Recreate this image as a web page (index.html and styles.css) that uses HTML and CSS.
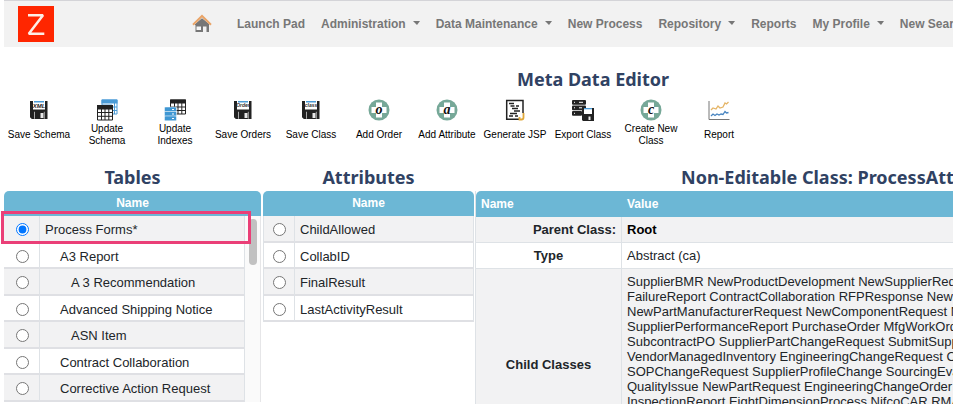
FILE: index.html
```html
<!DOCTYPE html>
<html lang="en">
<head>
<meta charset="utf-8">
<title>Meta Data Editor</title>
<link rel="stylesheet" href="styles.css">
</head>
<body>
<div class="page">
  <header class="topbar">
    <a class="logo" href="#" aria-label="Start">
      <svg viewBox="0 0 36 36" width="36" height="36"><rect width="36" height="36" fill="#ff2600"/><path d="M10 9.3H25L10.8 27.8H26.3" fill="none" stroke="#fdeee6" stroke-width="2.5" stroke-linejoin="bevel"/></svg>
    </a>
    <a class="home" href="#" aria-label="Home">
      <svg viewBox="0 0 20 20" width="20" height="20"><path d="M10 4.500L3.500 10v8H17v-8z" fill="#777"/><path d="M4.500 12.500h4.500V16H4.500z" fill="#f6f6f6"/><path d="M11 12.500h3.500V18H11z" fill="#f2f2f2"/><path d="M1 10.800L10 2l9 8.800" fill="none" stroke="#e9a468" stroke-width="2"/><path d="M3 11L10 4.800 17 11" fill="none" stroke="#777" stroke-width="1"/></svg>
    </a>
    <nav class="menu">
      <a href="#">Launch Pad</a>
      <a class="drop" href="#">Administration</a>
      <a class="drop" href="#">Data Maintenance</a>
      <a href="#">New Process</a>
      <a class="drop" href="#">Repository</a>
      <a href="#">Reports</a>
      <a class="drop" href="#">My Profile</a>
      <a href="#">New Search</a>
    </nav>
  </header>

  <h1>Meta Data Editor</h1>

  <svg class="defs" width="0" height="0" aria-hidden="true">
    <symbol id="disk" viewBox="0 0 20 22"><path d="M1 2h17.500v18H2.800L1 18.200z" fill="#222"/><path d="M4 2h12v8.500H4z" fill="#fff"/><path d="M5 2h10v1.500H5z" fill="#4a9bd6"/><path d="M11.500 14h3v5h-3z" fill="#e8e8e8"/><path d="M5 12.800h1v7H5zM14.800 12.800h1v7h-1z" fill="#aaa"/></symbol>
    <symbol id="plus" viewBox="0 0 22 22"><circle cx="11" cy="11" r="10.500" fill="#76a898"/><path d="M8 3.500h6V8h4.500v6H14v4.500H8V14H3.500V8H8z" fill="#fff"/></symbol>
  </svg>

  <div class="toolbar">
    <button><svg viewBox="0 0 20 22" width="20" height="22"><use href="#disk"/><text class="xml" x="10" y="9" text-anchor="middle">XML</text></svg><span>Save Schema</span></button>
    <button><svg viewBox="0 0 22 22" width="22" height="22"><path d="M6 1h15v14h-5V6H6z" fill="#fff" stroke="#4a9bd6"/><path d="M5.500 .5h16v4h-16z" fill="#4a9bd6"/><path d="M16 8h5M16 11.500h5M18.500 4v11" stroke="#4a9bd6"/><path d="M1.500 7h15v14h-15z" fill="#fff" stroke="#222"/><path d="M1 6h16v4.500H1z" fill="#222"/><path d="M1 13.500h16M1 17.300h16M5.500 10v11M9 10v11M12.800 10v11" stroke="#222"/></svg><span>Update Schema</span></button>
    <button><svg viewBox="0 0 22 22" width="22" height="22"><path d="M6.500 1h15v14h-15z" fill="#fff" stroke="#222"/><path d="M6 .5h16v4H6z" fill="#222"/><path d="M6 8h16M6 11.500h16M10.500 4v11M14 4v11M17.800 4v11" stroke="#222"/><g fill="#3f97d3" stroke="#fff" stroke-width=".5"><rect x=".5" y="8" width="12" height="4.800" rx="1"/><rect x=".5" y="12.500" width="12" height="4.800" rx="1"/><rect x=".5" y="17" width="12" height="4.800" rx="1"/></g><path d="M8 10.500h2M8 15h2M8 19.500h2" stroke="#fff"/></svg><span>Update Indexes</span></button>
    <button><svg viewBox="0 0 20 22" width="20" height="22"><use href="#disk"/><text class="tag" x="10" y="8" text-anchor="middle">Order</text></svg><span>Save Orders</span></button>
    <button><svg viewBox="0 0 20 22" width="20" height="22"><use href="#disk"/><text class="tag" x="10" y="8" text-anchor="middle">class</text></svg><span>Save Class</span></button>
    <button><svg viewBox="0 0 22 22" width="22" height="22"><use href="#plus"/><text class="letter" x="11" y="15" text-anchor="middle">o</text></svg><span>Add Order</span></button>
    <button><svg viewBox="0 0 22 22" width="22" height="22"><use href="#plus"/><text class="letter" x="11" y="15" text-anchor="middle">a</text></svg><span>Add Attribute</span></button>
    <button><svg viewBox="0 0 22 22" width="22" height="22"><path d="M15 20.300H2.700V1.500H19V14" fill="#fff" stroke="#222" stroke-width="1.500"/><path d="M5 4.500h5M6.500 7h4M12 7h3M8 9.500h6M10 12h6M6 14.500h7M5 17h4M11 17h3" stroke="#222" stroke-width="1.300"/><path d="M19.500 14v4.500q0 2-2 2h-2v-2.500" fill="none" stroke="#e0a83a" stroke-width="1.800"/></svg><span>Generate JSP</span></button>
    <button><svg viewBox="0 0 22 22" width="22" height="22"><g fill="#222"><rect x="0" y="1" width="14" height="4.700" rx="1"/><rect x="0" y="6.500" width="14" height="4.700" rx="1"/><rect x="0" y="12" width="10" height="4.700" rx="1"/><path d="M10 9h12v13H11l-1-1z"/></g><path d="M7 3.300h4M7 8.800h3M2 3.300h1M2 8.800h1M2 14.300h1" stroke="#fff"/><path d="M12 10h8v5h-8z" fill="#fff"/><path d="M12 9h8v1.300h-8z" fill="#4a9bd6"/><path d="M16.500 17.500h2V21h-2z" fill="#eee"/></svg><span>Export Class</span></button>
    <button><svg viewBox="0 0 22 22" width="22" height="22"><use href="#plus"/><text class="letter" x="11" y="15" text-anchor="middle">c</text></svg><span>Create New Class</span></button>
    <button><svg viewBox="0 0 22 22" width="22" height="22"><path d="M1 2v18.500h20.500" fill="none" stroke="#777"/><path d="M3 11l2-2 3 1 2-3 2 2 3-1 2-4 1.500 1L20.500 3" fill="none" stroke="#e5b567" stroke-width="1.300"/><path d="M3 17l2-2 2 1.500 2-1.500 2 1 2-1 2 .5 2-3 1.500 1.500 2-.5" fill="none" stroke="#4784c0" stroke-width="1.300"/></svg><span>Report</span></button>
  </div>

  <main class="panels">
    <section class="panel tables">
      <h2>Tables</h2>
      <div class="head">Name</div>
      <div class="scroller">
        <table>
          <tr><td class="pick"><input type="radio" name="t" id="t1" checked></td><td><label for="t1">Process Forms*</label></td></tr>
          <tr><td class="pick"><input type="radio" name="t" id="t2"></td><td class="level1"><label for="t2">A3 Report</label></td></tr>
          <tr><td class="pick"><input type="radio" name="t" id="t3"></td><td class="level2"><label for="t3">A 3 Recommendation</label></td></tr>
          <tr><td class="pick"><input type="radio" name="t" id="t4"></td><td class="level1"><label for="t4">Advanced Shipping Notice</label></td></tr>
          <tr><td class="pick"><input type="radio" name="t" id="t5"></td><td class="level2"><label for="t5">ASN Item</label></td></tr>
          <tr><td class="pick"><input type="radio" name="t" id="t6"></td><td class="level1"><label for="t6">Contract Collaboration</label></td></tr>
          <tr><td class="pick"><input type="radio" name="t" id="t7"></td><td class="level1"><label for="t7">Corrective Action Request</label></td></tr>
        </table>
        <div class="track"><div class="thumb"></div></div>
      </div>
      <div class="callout"></div>
    </section>

    <section class="panel attributes">
      <h2>Attributes</h2>
      <div class="head">Name</div>
      <table>
        <tr><td class="pick"><input type="radio" name="a" id="a1"></td><td><label for="a1">ChildAllowed</label></td></tr>
        <tr><td class="pick"><input type="radio" name="a" id="a2"></td><td><label for="a2">CollabID</label></td></tr>
        <tr><td class="pick"><input type="radio" name="a" id="a3"></td><td><label for="a3">FinalResult</label></td></tr>
        <tr><td class="pick"><input type="radio" name="a" id="a4"></td><td><label for="a4">LastActivityResult</label></td></tr>
      </table>
    </section>

    <section class="panel details">
      <h2>Non-Editable Class: ProcessAttributes</h2>
      <table>
        <thead><tr><th>Name</th><th>Value</th></tr></thead>
        <tbody>
          <tr><th class="end">Parent Class:</th><td class="strong">Root</td></tr>
          <tr><th>Type</th><td>Abstract (ca)</td></tr>
          <tr><th>Child Classes</th><td class="classes">SupplierBMR NewProductDevelopment NewSupplierRequest<br>FailureReport ContractCollaboration RFPResponse NewItem<br>NewPartManufacturerRequest NewComponentRequest NewPart<br>SupplierPerformanceReport PurchaseOrder MfgWorkOrder<br>SubcontractPO SupplierPartChangeRequest SubmitSupplier<br>VendorManagedInventory EngineeringChangeRequest Order<br>SOPChangeRequest SupplierProfileChange SourcingEvaluation<br>QualityIssue NewPartRequest EngineeringChangeOrder<br>InspectionReport EightDimensionProcess NifcoCAR RMA</td></tr>
        </tbody>
      </table>
    </section>
  </main>
</div>
</body>
</html>
```

FILE: styles.css
```css
* { box-sizing: border-box; }
html { overflow: hidden; }
body {
  margin: 0;
  background: #fff;
  color: #212529;
  font: 13px/15px "Liberation Sans", Arial, sans-serif;
}
.page { min-width: 1182px; padding-left: 4px; }
.defs { position: absolute; }
h1, h2 {
  margin: 0;
  color: #304263;
  font: bold 18px/24px "Noto Sans", "Open Sans", sans-serif;
  text-align: center;
  white-space: nowrap;
}

.topbar {
  display: flex;
  align-items: center;
  height: 47px;
  padding-left: 14px;
  background: #f2f2f2;
  border-top: 1px solid #d4d4d8;
}
.topbar svg { display: block; }
.home { margin: 0 17px 0 138px; }
.menu { display: flex; }
.menu a {
  display: flex;
  align-items: center;
  padding: 0 8px;
  color: #777;
  font-size: 12px;
  font-weight: bold;
  text-decoration: none;
  white-space: nowrap;
}
.drop::after {
  content: "";
  margin: 0 0 2px 7px;
  border: 4px solid transparent;
  border-width: 4px 3px 0 4px;
  border-top-color: #777;
}
h1 { padding-top: 20px; }

.toolbar { display: flex; padding: 8px 0 0 1px; }
.toolbar button {
  display: flex;
  flex-direction: column;
  align-items: center;
  width: 68px;
  padding: 0;
  border: 0;
  background: none;
  color: #000;
  font: 10px/12px "Liberation Sans", Arial, sans-serif;
}
.toolbar span {
  display: flex;
  align-items: center;
  height: 24px;
  max-width: 66px;
  margin-top: 2px;
  text-align: center;
}
.xml { font: italic bold 6px "Liberation Sans", sans-serif; fill: #222; }
.tag { font: italic bold 5px "Liberation Sans", sans-serif; fill: #333; }
.letter { font: italic bold 14px "Liberation Serif", serif; fill: #111; }

.panels {
  display: grid;
  grid-template-columns: 257px 211px 1fr;
  column-gap: 2px;
  padding-top: 18px;
}
.details { margin-left: -1px; }
.panel { position: relative; }
h2 { height: 26px; }
.details h2 { padding-left: 206px; text-align: left; }
.head, thead th {
  height: 25px;
  background: #6cb7d5;
  color: #fff;
  font-size: 12px;
  font-weight: bold;
  line-height: 25px;
  text-align: center;
}
.head { border-radius: 5px 5px 0 0; }
table { width: 100%; border-collapse: separate; border-spacing: 0; }
td, tbody th {
  padding: 0 5px;
  border-right: 1px solid #dee2e6;
  border-bottom: 1px solid #dee2e6;
}
tr:nth-child(odd) td, tbody tr:nth-child(odd) th { background: #f2f2f3; }
.tables td, .attributes td {
  height: 26px;
  padding-top: 2px;
  border-bottom: 2px solid #dfe0e4;
}
.tables tr:nth-child(odd) td, .attributes tr:nth-child(odd) td { height: 27px; }
.pick { width: 36px; padding-left: 6px; text-align: center; }
.attributes .pick { width: 31px; }
.attributes table { border-left: 1px solid #dee2e6; }
input { display: block; width: 13px; height: 13px; margin: 0 auto; }
.level1 { padding-left: 20px; }
.level2 { padding-left: 31px; }

.scroller { display: flex; border-right: 1px solid #e6e6e8; }
.scroller table { flex: 1; }
.track { width: 15px; padding: 3px 3px 0 4px; background: #fafafa; }
.thumb { height: 46px; border-radius: 4px; background: #c1c1c1; }
.callout {
  position: absolute;
  top: 46px;
  left: -3px;
  width: 250px;
  height: 33px;
  border: 3px solid #ea3f77;
  pointer-events: none;
}

.details table { border-left: 1px solid #dee2e6; }
.details thead th { height: 26px; padding: 0 5px; text-align: left; }
.details thead th:first-child { width: 146px; border-top-left-radius: 5px; }
.details tbody tr { height: 26px; }
.details .end { text-align: right; }
.details .strong { color: #000; font-weight: bold; }
.details .classes { padding-top: 5px; padding-bottom: 50px; white-space: nowrap; }
```
